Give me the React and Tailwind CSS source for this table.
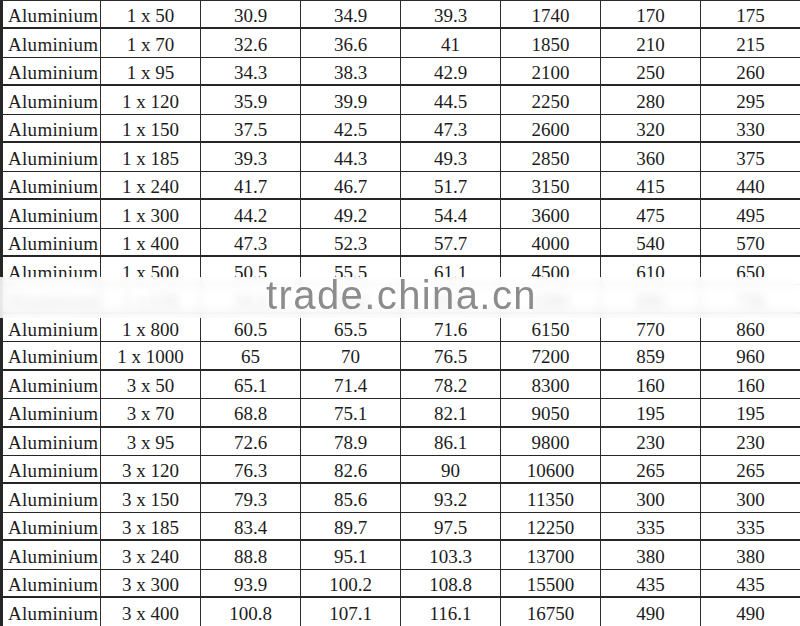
import React from "react";

const rows = [
  ["1 x 50", "30.9", "34.9", "39.3", "1740", "170", "175"],
  ["1 x 70", "32.6", "36.6", "41", "1850", "210", "215"],
  ["1 x 95", "34.3", "38.3", "42.9", "2100", "250", "260"],
  ["1 x 120", "35.9", "39.9", "44.5", "2250", "280", "295"],
  ["1 x 150", "37.5", "42.5", "47.3", "2600", "320", "330"],
  ["1 x 185", "39.3", "44.3", "49.3", "2850", "360", "375"],
  ["1 x 240", "41.7", "46.7", "51.7", "3150", "415", "440"],
  ["1 x 300", "44.2", "49.2", "54.4", "3600", "475", "495"],
  ["1 x 400", "47.3", "52.3", "57.7", "4000", "540", "570"],
  ["1 x 500", "50.5", "55.5", "61.1", "4500", "610", "650"],
  ["1 x 630", "54.4", "59.4", "65.2", "5300", "690", "750"],
  ["1 x 800", "60.5", "65.5", "71.6", "6150", "770", "860"],
  ["1 x 1000", "65", "70", "76.5", "7200", "859", "960"],
  ["3 x 50", "65.1", "71.4", "78.2", "8300", "160", "160"],
  ["3 x 70", "68.8", "75.1", "82.1", "9050", "195", "195"],
  ["3 x 95", "72.6", "78.9", "86.1", "9800", "230", "230"],
  ["3 x 120", "76.3", "82.6", "90", "10600", "265", "265"],
  ["3 x 150", "79.3", "85.6", "93.2", "11350", "300", "300"],
  ["3 x 185", "83.4", "89.7", "97.5", "12250", "335", "335"],
  ["3 x 240", "88.8", "95.1", "103.3", "13700", "380", "380"],
  ["3 x 300", "93.9", "100.2", "108.8", "15500", "435", "435"],
  ["3 x 400", "100.8", "107.1", "116.1", "16750", "490", "490"],
];

export default function App() {
  return (
    <div
      className="relative w-[800px] h-[626px] overflow-hidden bg-white text-[#1c1c1c] text-[19px] leading-none"
      style={{ fontFamily: '"Liberation Serif", "Times New Roman", serif' }}
    >
      <div className="flex flex-col border-t border-[#2a2a2a]">
        {rows.map((r, i) => (
          <div
            key={i}
            className={
              "flex h-[28.45px] box-border border-[#262626] " +
              (i % 2 === 0 ? "border-b-2" : "border-b")
            }
          >
            <div className="w-[100px] shrink-0 border-l-[3px] border-[#262626] flex items-center pl-[5px] pt-[3px] tracking-[0.3px]">
              Aluminium
            </div>
            {r.map((c, j) => (
              <div
                key={j}
                className="w-[100px] shrink-0 border-l-[1.5px] border-[#2e2e2e] flex items-center justify-center pt-[3px]"
              >
                {c}
              </div>
            ))}
          </div>
        ))}
      </div>

      <div className="absolute left-0 right-0 top-[277px] h-[41px] bg-white/85 backdrop-blur-[4px] flex items-end justify-center">
        <span
          className="text-[40px] leading-none text-[#8c8c8c] tracking-[1.4px] pb-[3px] ml-[3px]"
          style={{ fontFamily: '"Liberation Sans", Arial, sans-serif' }}
        >
          trade.china.cn
        </span>
      </div>
    </div>
  );
}
